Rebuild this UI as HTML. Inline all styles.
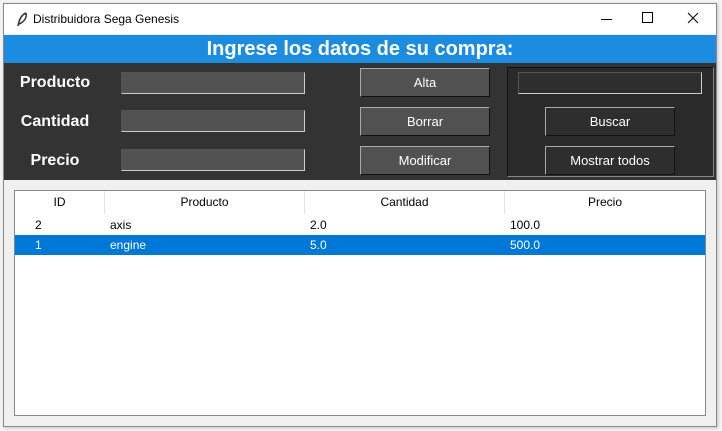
<!DOCTYPE html>
<html><head><style>
*{margin:0;padding:0;box-sizing:border-box}
body{width:722px;height:431px;background:#f3f3f3;position:relative;overflow:hidden;font-family:"Liberation Sans",sans-serif}
.a{position:absolute}
.win{left:3px;top:3px;width:714px;height:424px;border:1px solid #8a8a8a;background:#f0f0f0;box-shadow:1px 1px 3px rgba(0,0,0,.2)}
.title{left:4px;top:4px;width:712px;height:30px;background:#fff;font-size:12px;color:#000}
.blue{left:4px;top:35px;width:712px;height:28px;background:#1c8ce0;color:#fff;font-weight:bold;font-size:20px;text-align:center;line-height:28px}
.dark{left:4px;top:63px;width:712px;height:117px;background:#333}
.lbl{color:#fff;font-weight:bold;font-size:16px;text-align:center;width:100px}
.ent{background:#525252;border:1px solid #555;border-right-color:#ccc;border-bottom-color:#ccc;width:184px;height:22px}
.btn{width:130px;height:29px;background:#515151;color:#fff;font-size:13px;text-align:center;line-height:27px;border:1px solid #aaa;border-right-color:#111;border-bottom-color:#111}
.btn2{background:#2e2e2e}
.tbl{left:14px;top:190px;width:692px;height:226px;background:#fff;border:1px solid #888;font-size:12px}
.h{top:0;height:23px;line-height:23px;text-align:center;color:#000;border-right:1px solid #e5e5e5}
.c{line-height:20px}
</style></head><body>
<div class="a win"></div>
<div class="a title">
<svg class="a" style="left:12px;top:8px" width="12" height="16" viewBox="0 0 12 16"><path d="M10 1 C5 3 3 8 2 14 M10 1 C11 6 8 10 3 12" stroke="#333" stroke-width="1.5" fill="none"/></svg>
<span class="a" style="left:29px;top:8px">Distribuidora Sega Genesis</span>
<div class="a" style="left:597px;top:15px;width:11px;height:1px;background:#000"></div>
<div class="a" style="left:638px;top:8px;width:11px;height:11px;border:1px solid #000"></div>
<svg class="a" style="left:683px;top:8px" width="12" height="12"><path d="M1 1L11 11M11 1L1 11" stroke="#000" stroke-width="1"/></svg>
</div>
<div class="a blue">Ingrese los datos de su compra:</div>
<div class="a dark"></div>
<div class="a lbl" style="left:5px;top:74px">Producto</div>
<div class="a lbl" style="left:5px;top:113px">Cantidad</div>
<div class="a lbl" style="left:5px;top:152px">Precio</div>
<div class="a ent" style="left:121px;top:72px"></div>
<div class="a ent" style="left:121px;top:110px"></div>
<div class="a ent" style="left:121px;top:149px"></div>
<div class="a btn" style="left:360px;top:68px">Alta</div>
<div class="a btn" style="left:360px;top:107px">Borrar</div>
<div class="a btn" style="left:360px;top:146px">Modificar</div>
<div class="a" style="left:507px;top:67px;width:207px;height:110px;background:#2a2a2a;border:1px solid #888;border-top-color:#111;border-left-color:#111"></div>
<div class="a ent" style="left:518px;top:72px;background:#2e2e2e;width:184px"></div>
<div class="a btn btn2" style="left:545px;top:107px">Buscar</div>
<div class="a btn btn2" style="left:545px;top:146px">Mostrar todos</div>
<div class="a tbl">
<div class="a h" style="left:0;width:90px">ID</div>
<div class="a h" style="left:90px;width:200px">Producto</div>
<div class="a h" style="left:290px;width:200px">Cantidad</div>
<div class="a h" style="left:490px;width:200px;border:none">Precio</div>
<div class="a c" style="top:24px;left:0;width:690px;height:20px">
<span class="a" style="left:20px">2</span><span class="a" style="left:95px">axis</span><span class="a" style="left:295px">2.0</span><span class="a" style="left:495px">100.0</span></div>
<div class="a c" style="top:44px;left:0;width:690px;height:20px;background:#0078d7;color:#fff">
<span class="a" style="left:20px">1</span><span class="a" style="left:95px">engine</span><span class="a" style="left:295px">5.0</span><span class="a" style="left:495px">500.0</span></div>
</div>
</body></html>
